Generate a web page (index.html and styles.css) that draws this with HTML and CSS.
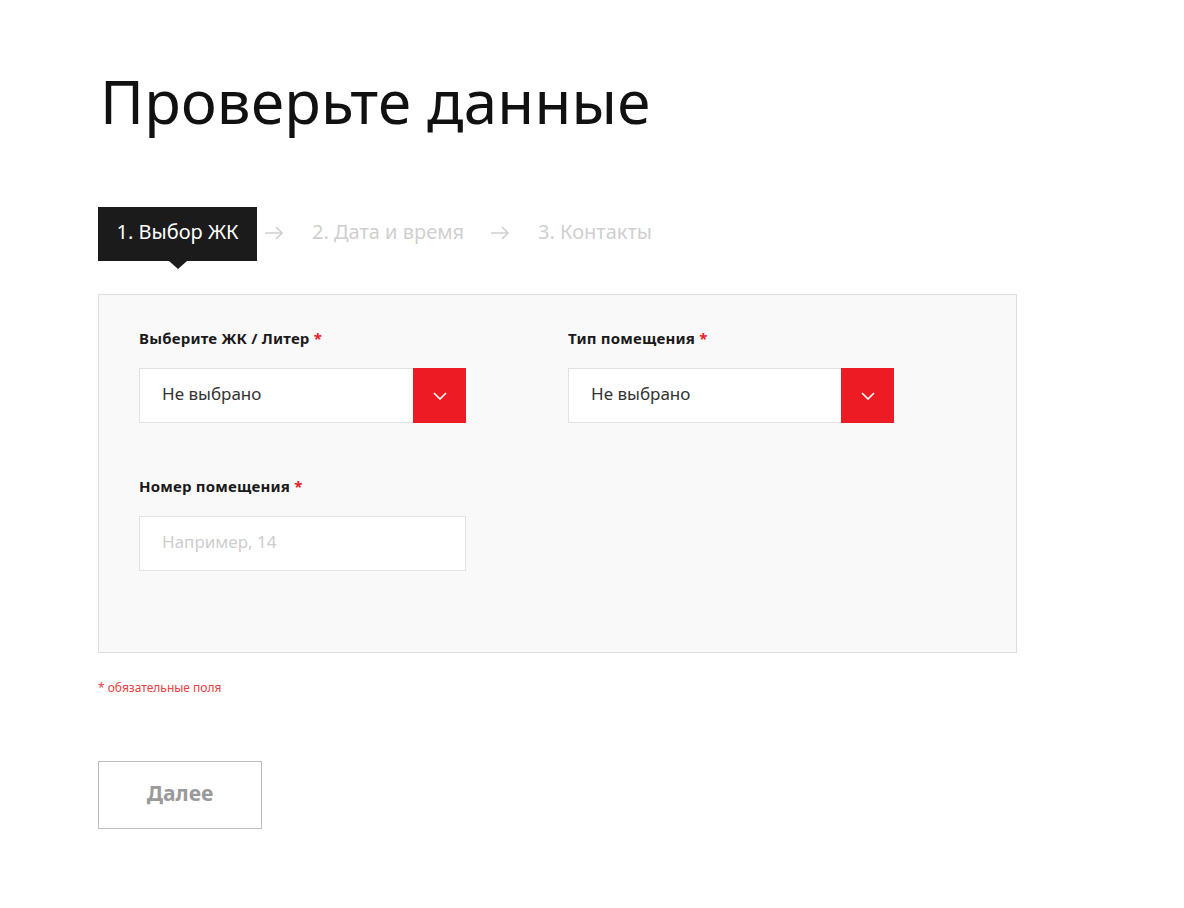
FILE: index.html
```html
<!DOCTYPE html>
<html lang="ru">
<head>
<meta charset="utf-8">
<link rel="stylesheet" href="styles.css">
</head>
<body>
<main class="page">
  <h1 class="title">Проверьте данные</h1>
  <nav class="steps">
    <div class="step active">1. Выбор ЖК</div>
    <span class="arrow"><svg width="20" height="14" viewBox="0 0 20 14"><path d="M1 7h17M12 1l6 6-6 6" fill="none" stroke="#cfcfcf" stroke-width="1.6"/></svg></span>
    <div class="step">2. Дата и время</div>
    <span class="arrow"><svg width="20" height="14" viewBox="0 0 20 14"><path d="M1 7h17M12 1l6 6-6 6" fill="none" stroke="#cfcfcf" stroke-width="1.6"/></svg></span>
    <div class="step">3. Контакты</div>
  </nav>
  <section class="panel">
    <div class="field">
      <div class="label">Выберите ЖК / Литер <span class="req">*</span></div>
      <div class="select">
        <span class="value">Не выбрано</span>
        <span class="btn"><svg width="14" height="8" viewBox="0 0 14 8"><path d="M1 1l6 6 6-6" fill="none" stroke="#fff" stroke-width="1.6"/></svg></span>
      </div>
    </div>
    <div class="field">
      <div class="label">Тип помещения <span class="req">*</span></div>
      <div class="select">
        <span class="value">Не выбрано</span>
        <span class="btn"><svg width="14" height="8" viewBox="0 0 14 8"><path d="M1 1l6 6 6-6" fill="none" stroke="#fff" stroke-width="1.6"/></svg></span>
      </div>
    </div>
    <div class="field">
      <div class="label">Номер помещения <span class="req">*</span></div>
      <div class="input"><span class="placeholder">Например, 14</span></div>
    </div>
  </section>
  <p class="note">* обязательные поля</p>
  <button class="next">Далее</button>
</main>
</body>
</html>
```
FILE: styles.css
```css
* { box-sizing: border-box; }
html, body { margin: 0; padding: 0; background: #fff; }
body { font-family: "Noto Sans", "Open Sans", sans-serif; color: #1a1a1a; }
.page { padding: 61px 0 0 98px; width: 1017px; }
.title {
  margin: 0 0 0 2px;
  font-family: "Noto Sans", sans-serif;
  font-weight: 400;
  font-size: 60px;
  line-height: 80px;
  letter-spacing: 0.25px;
  color: #111;
}
.steps { display: flex; align-items: center; margin-top: 66px; height: 54px; }
.step { font-size: 20px; color: #cfcfcf; letter-spacing: 0; padding-bottom: 5px; }
.step.active {
  position: relative;
  background: #1b1b1b;
  color: #fff;
  height: 54px;
  width: 159px;
  margin-right: -19px;
  display: flex;
  align-items: center;
  justify-content: center;
}
.step.active::after {
  content: "";
  position: absolute;
  left: 71px;
  bottom: -8px;
  border-left: 9px solid transparent;
  border-right: 9px solid transparent;
  border-top: 8px solid #1b1b1b;
}
.arrow { display: flex; margin: 0 28px 0 26px; padding-bottom: 2px; }
.panel {
  margin-top: 33px;
  border: 1px solid #dedede;
  background: #f9f9f9;
  padding: 34px 40px 82px;
  display: grid;
  grid-template-columns: 327px 326px;
  column-gap: 102px;
  row-gap: 54px;
  height: 359px;
}
.label { font-size: 15px; font-weight: 700; color: #1a1a1a; line-height: 18px; margin-bottom: 21px; letter-spacing: 0.2px; }
.req { color: #e8202a; }
.select {
  display: flex;
  height: 55px;
  background: #fff;
  border: 1px solid #e2e2e2;
}
.value { flex: 1; display: flex; align-items: center; padding-left: 22px; padding-bottom: 4px; font-size: 17px; color: #333; }
.btn { width: 53px; margin: -1px -1px -1px 0; background: #ed1c24; display: flex; align-items: center; justify-content: center; }
.input {
  height: 55px;
  background: #fff;
  border: 1px solid #e2e2e2;
  display: flex;
  align-items: center;
  padding-left: 22px;
  padding-bottom: 4px;
}
.placeholder { font-size: 17px; color: #cdcdcd; }
.note { margin: 26px 0 0; font-size: 12px; color: #e8403f; }
.next {
  display: block;
  margin-top: 65px;
  width: 164px;
  height: 68px;
  background: #fff;
  border: 1px solid #bdbdbd;
  font-family: "Noto Sans", sans-serif;
  font-weight: 700;
  font-size: 21px;
  color: #9a9a9a;
  padding-bottom: 6px;
}
```
